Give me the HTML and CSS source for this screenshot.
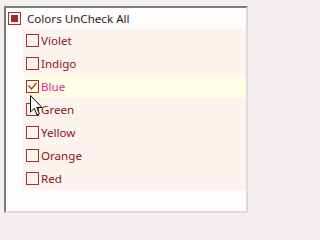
FILE: index.html
```html
<!DOCTYPE html>
<html>
<head>
<meta charset="utf-8">
<link rel="stylesheet" href="styles.css">
</head>
<body>
<div class="box">
  <div class="header">
    <span class="cb cb-partial"><span class="dot"></span></span>
    <span class="htext">Colors UnCheck All</span>
  </div>
  <div class="list">
    <div class="row"><span class="cb"></span><span class="label">Violet</span></div>
    <div class="row"><span class="cb"></span><span class="label">Indigo</span></div>
    <div class="row row-hot"><span class="cb cb-checked"><svg width="11" height="11" viewBox="0 0 11 11"><path d="M1.5 4.5 L4.5 8 L9.5 2" fill="none" stroke="#a8343a" stroke-width="1.3"/></svg></span><span class="label label-checked">Blue</span></div>
    <div class="row"><span class="cb"></span><span class="label">Green</span></div>
    <div class="row"><span class="cb"></span><span class="label">Yellow</span></div>
    <div class="row"><span class="cb"></span><span class="label">Orange</span></div>
    <div class="row"><span class="cb"></span><span class="label">Red</span></div>
  </div>
  <svg class="cursor" width="13" height="21" viewBox="0 0 13 21"><path d="M0.5 0.5 L0.5 17 L4.3 13.3 L7 19.8 L9.4 18.8 L6.8 12.5 L12 12.5 Z" fill="#fff" stroke="#000" stroke-width="1" stroke-linejoin="miter"/></svg>
</div>
</body>
</html>
```
FILE: styles.css
```css
html, body {
  margin: 0;
  padding: 0;
  background: #f3efef;
}
body {
  font-family: "Noto Sans", "Open Sans", sans-serif;
  font-size: 11.6px;
  width: 254px;
  height: 218px;
  overflow: hidden;
}
.box {
  position: relative;
  box-sizing: border-box;
  margin: 6px 0 0 4px;
  width: 244px;
  height: 207px;
  background: #fffdfc;
  border-top: 2px solid #7d7d7d;
  border-left: 2px solid #7d7d7d;
  border-right: 2px solid #dcdcdc;
  border-bottom: 2px solid #dcdcdc;
}
.header {
  display: flex;
  align-items: center;
  height: 21px;
  padding-left: 2px;
  gap: 6px;
  color: #1e1a1a;
}
.cb {
  box-sizing: border-box;
  width: 13px;
  height: 13px;
  border: 1px solid #9a3236;
  background: #fffdfc;
  display: flex;
  align-items: center;
  justify-content: center;
  flex: none;
}
.dot {
  width: 7px;
  height: 7px;
  background: #a1262c;
}
.list {
  margin-left: 17px;
  background: #fdf3ee;
}
.row {
  display: flex;
  align-items: center;
  height: 23px;
  padding-left: 3px;
  gap: 2px;
}
.row .cb {
  background: transparent;
}
.row-hot {
  background: #fffde6;
}
.label {
  color: #86161b;
}
.label-checked {
  color: #e2268d;
}
.cursor {
  position: absolute;
  left: 24px;
  top: 87px;
}
```
